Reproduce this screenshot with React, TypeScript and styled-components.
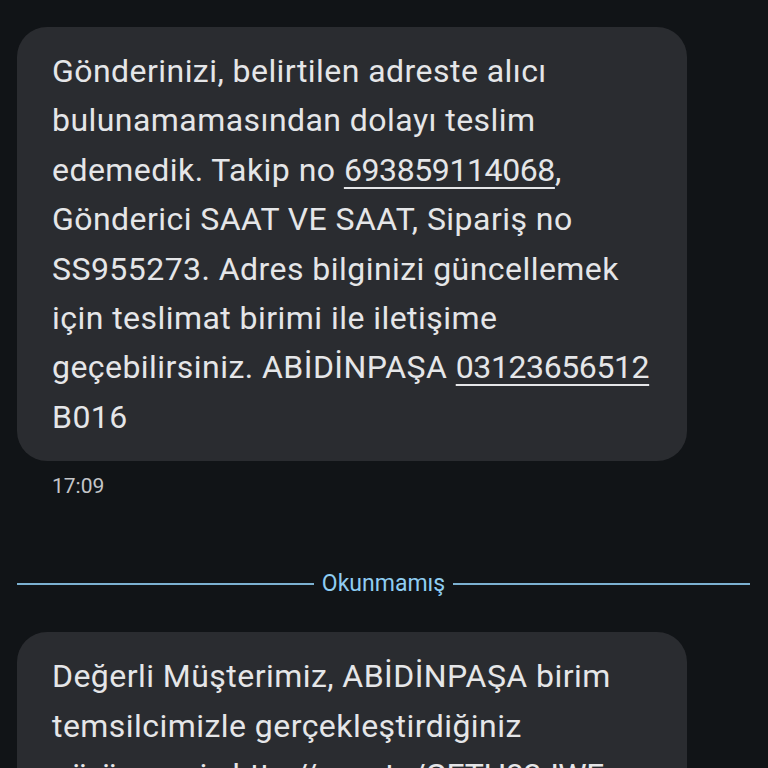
import * as React from 'react'
import styled, { createGlobalStyle } from 'styled-components'

const GlobalStyle = createGlobalStyle`
  html, body {
    margin: 0;
    background: #111417;
  }
  body {
    font-family: Roboto, "Noto Sans", sans-serif;
    overflow: hidden;
  }
`

const Thread = styled.main`
  display: flex;
  flex-direction: column;
  align-items: flex-start;
  padding: 27px 18px 0 17px;
  height: 768px;
  box-sizing: border-box;
  overflow: hidden;
`

const Bubble = styled.div<{ $top?: number }>`
  width: 670px;
  box-sizing: border-box;
  margin-top: ${p => p.$top ?? 0}px;
  padding: 20px 30px 19px 35px;
  background: #2a2c30;
  border-radius: 30px;
  color: #e5e6e8;
  font-size: 32px;
  line-height: 49.4px;
  letter-spacing: 0.45px;
  white-space: nowrap;
`

const Link = styled.span`
  letter-spacing: -0.4px;
  text-decoration: underline;
  text-decoration-thickness: 2px;
  text-underline-offset: 6px;
`

const Time = styled.div`
  margin: 12px 0 0 35px;
  color: #c4c6c9;
  font-size: 21px;
  line-height: 26px;
`

const Divider = styled.div`
  align-self: stretch;
  display: flex;
  align-items: center;
  gap: 8px;
  margin: 71px 0 0 0;
  color: #8fcdf2;
  font-size: 23px;
  line-height: 28px;
  &::before,
  &::after {
    content: '';
    flex: 1;
    height: 2px;
    background: #8fcdf2;
    opacity: 0.85;
  }
`

export default function App() {
  return (
    <>
      <GlobalStyle />
      <Thread>
        <Bubble>
          Gönderinizi, belirtilen adreste alıcı
          <br />
          bulunamamasından dolayı teslim
          <br />
          edemedik. Takip no <Link>693859114068</Link>,
          <br />
          Gönderici SAAT VE SAAT, Sipariş no
          <br />
          SS955273. Adres bilginizi güncellemek
          <br />
          için teslimat birimi ile iletişime
          <br />
          geçebilirsiniz. ABİDİNPAŞA <Link>03123656512</Link>
          <br />
          B016
        </Bubble>
        <Time>17:09</Time>
        <Divider>Okunmamış</Divider>
        <Bubble $top={34}>
          Değerli Müşterimiz, ABİDİNPAŞA birim
          <br />
          temsilcimizle gerçekleştirdiğiniz
          <br />
          görüşmeniz <Link>http://sms.to/GETH82JWF</Link>
          <br />
          için teşekkür ederiz.
        </Bubble>
      </Thread>
    </>
  )
}
